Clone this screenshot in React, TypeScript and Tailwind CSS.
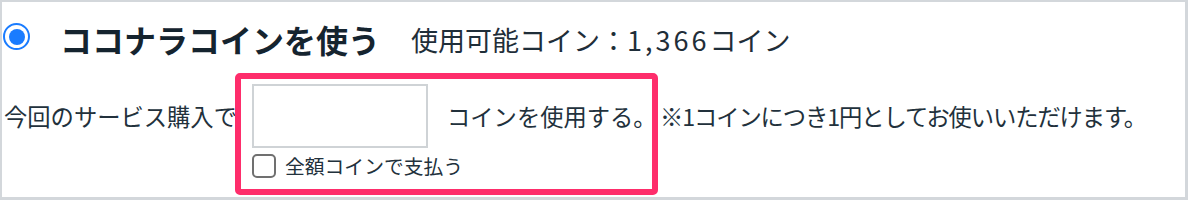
const font = { fontFamily: '"Noto Sans CJK JP", "Noto Sans", sans-serif' };

export default function App() {
    return (
        <div
            className="w-[1188px] h-[200px] bg-white border-t-2 border-l-2 border-r-[3px] border-b-[3px] border-[#d3d7db] overflow-hidden"
            style={font}
        >
            {/* Coin usage header */}
            <div className="flex items-center h-[74px]">
                <div className="ml-[1px] mb-[5px] w-[27px] h-[27px] rounded-full border-[2.5px] border-[#1a7cff] flex items-center justify-center shrink-0">
                    <div className="w-[16px] h-[16px] rounded-full bg-[#1a7cff]" />
                </div>
                <span className="ml-[30px] text-[32px] leading-none font-bold text-[#15242f] whitespace-nowrap">
                    ココナラコインを使う
                </span>
                <span className="ml-[31px] text-[27px] leading-none text-[#1f2e39] whitespace-nowrap">
                    使用可能コイン：<span className="tracking-[3px]">1,366</span>コイン
                </span>
            </div>

            {/* Amount input row */}
            <div className="relative flex items-start pt-[8px] pl-[2px]">
                <span className="mt-[16px] w-[248px] shrink-0 text-[23.3px] leading-[32px] text-[#22313c] whitespace-nowrap">
                    今回のサービス購入で
                </span>
                <div className="w-[176px] shrink-0">
                    <input
                        type="text"
                        className="block w-[176px] h-[64px] border-2 border-[#cfd3d6] bg-white outline-none"
                    />
                    <label className="mt-[6px] flex items-center whitespace-nowrap">
                        <span className="w-[24px] h-[24px] rounded-[5px] border-2 border-[#707070] bg-white shrink-0" />
                        <span className="ml-[9px] text-[19.8px] leading-[24px] text-[#22313c]">全額コインで支払う</span>
                    </label>
                </div>
                <span className="ml-[19px] mt-[16px] w-[213px] shrink-0 text-[23.3px] leading-[32px] text-[#22313c] whitespace-nowrap">
                    コインを使用する。
                </span>
                <span className="mt-[16px] text-[23.3px] leading-[32px] tracking-[-1.1px] text-[#22313c] whitespace-nowrap">
                    ※1コインにつき1円としてお使いいただけます。
                </span>
                <div className="absolute left-[233px] top-[-3px] w-[423px] h-[122px] border-[6px] border-[#fe2d6b] rounded-[5px] pointer-events-none" />
            </div>
        </div>
    );
}
